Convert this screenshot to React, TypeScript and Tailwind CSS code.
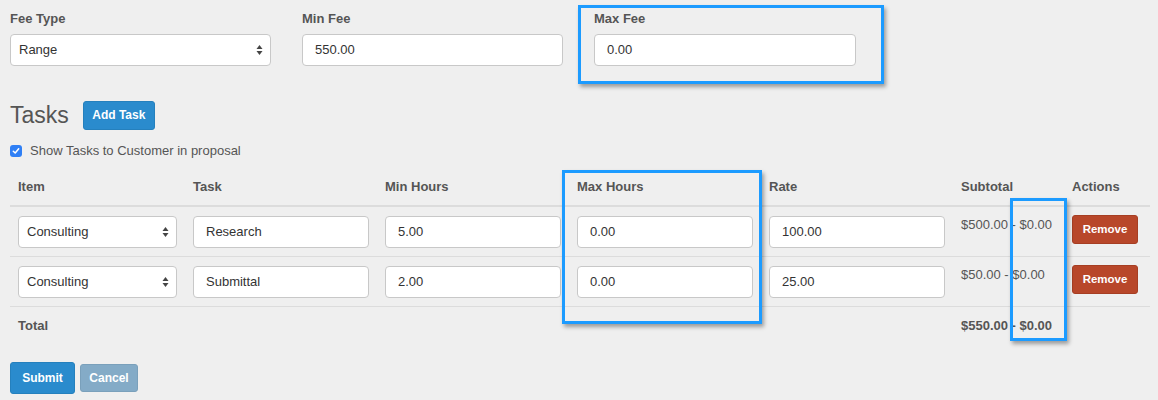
import React from 'react';

const font = { fontFamily: '"Liberation Sans", Arial, sans-serif' };

const Arrows: React.FC = () => (
  <svg className="absolute right-[7px] top-1/2 -translate-y-1/2" width="7" height="11" viewBox="0 0 7 11">
    <path d="M3.5 0.5 L6.5 4.5 L0.5 4.5 Z" fill="#444" />
    <path d="M3.5 10.5 L6.5 6.5 L0.5 6.5 Z" fill="#444" />
  </svg>
);

const Select: React.FC<{ value: string; className?: string }> = ({ value, className }) => (
  <div className={`relative h-[32px] rounded-[4px] border border-[#c8c8c8] bg-white pl-[8px] flex items-center text-[13px] text-[#333] ${className ?? ''}`}>
    {value}
    <Arrows />
  </div>
);

const Input: React.FC<{ value: string; className?: string }> = ({ value, className }) => (
  <div className={`h-[32px] rounded-[4px] border border-[#c8c8c8] bg-white pl-[12px] flex items-center text-[13px] text-[#333] ${className ?? ''}`}>
    {value}
  </div>
);

const Highlight: React.FC<{ className: string }> = ({ className }) => (
  <div className={`absolute border-[3px] border-[#1c9bff] shadow-[2px_3px_4px_rgba(0,0,0,0.35)] pointer-events-none ${className}`} />
);

const rows = [
  { item: 'Consulting', task: 'Research', min: '5.00', max: '0.00', rate: '100.00', sub: '$500.00 - $0.00' },
  { item: 'Consulting', task: 'Submittal', min: '2.00', max: '0.00', rate: '25.00', sub: '$50.00 - $0.00' },
];

const App: React.FC = () => {
  const th = 'text-left align-bottom px-[8px] pt-[8px] pb-[8px] text-[13px] font-bold text-[#555] border-b-2 border-[#dcdcdc]';
  const td = 'align-top px-[8px] pt-[9px] pb-[8px] border-b border-[#dcdcdc]';

  return (
    <div style={font} className="relative w-[1158px] h-[400px] overflow-hidden bg-[#efefef] text-[#555]">
      <div className="flex gap-[31px] pl-[10px] pt-[10px]">
        <div className="w-[261px]">
          <div className="text-[13px] font-bold leading-[18px] mb-[6px]">Fee Type</div>
          <Select value="Range" />
        </div>
        <div className="w-[261px]">
          <div className="text-[13px] font-bold leading-[18px] mb-[6px]">Min Fee</div>
          <Input value="550.00" />
        </div>
        <div className="w-[262px]">
          <div className="text-[13px] font-bold leading-[18px] mb-[6px]">Max Fee</div>
          <Input value="0.00" />
        </div>
      </div>

      <div className="flex items-center gap-[14px] pl-[10px] mt-[34px] h-[30px]">
        <h2 className="text-[23px] leading-[30px] text-[#555]">Tasks</h2>
        <button className="h-[29px] w-[72px] rounded-[3px] bg-[#2a8bcd] border border-[#2580bd] text-white text-[12px] font-bold">
          Add Task
        </button>
      </div>

      <label className="flex items-center gap-[8px] pl-[10px] mt-[12px] h-[18px] text-[13px] text-[#555]">
        <span className="w-[12px] h-[12px] rounded-[3px] bg-[#2f7ff5] flex items-center justify-center">
          <svg width="8" height="8" viewBox="0 0 8 8">
            <path d="M1.3 4.2 L3.2 6 L6.7 1.8" fill="none" stroke="white" strokeWidth="1.5" strokeLinecap="round" strokeLinejoin="round" />
          </svg>
        </span>
        Show Tasks to Customer in proposal
      </label>

      <table className="ml-[10px] mt-[9px] w-[1140px] table-fixed border-collapse">
        <colgroup>
          <col className="w-[175px]" />
          <col className="w-[192px]" />
          <col className="w-[192px]" />
          <col className="w-[192px]" />
          <col className="w-[192px]" />
          <col className="w-[111px]" />
          <col className="w-[86px]" />
        </colgroup>
        <thead>
          <tr>
            <th className={th}>Item</th>
            <th className={th}>Task</th>
            <th className={th}>Min Hours</th>
            <th className={th}>Max Hours</th>
            <th className={th}>Rate</th>
            <th className={th}>Subtotal</th>
            <th className={th}>Actions</th>
          </tr>
        </thead>
        <tbody>
          {rows.map((r, i) => (
            <tr key={i}>
              <td className={td}><Select value={r.item} /></td>
              <td className={td}><Input value={r.task} /></td>
              <td className={td}><Input value={r.min} /></td>
              <td className={td}><Input value={r.max} /></td>
              <td className={td}><Input value={r.rate} /></td>
              <td className={`${td} text-[13px] leading-[18px] text-[#555] whitespace-nowrap`}>{r.sub}</td>
              <td className={td}>
                <button className="h-[29px] w-[66px] -mt-[1px] rounded-[3px] bg-[#b8472a] border border-[#a63e23] text-white text-[11.5px] font-bold">
                  Remove
                </button>
              </td>
            </tr>
          ))}
          <tr>
            <td className="px-[8px] pt-[10px] pb-[8px] text-[13px] leading-[18px] font-bold">Total</td>
            <td className="p-[8px]" />
            <td className="p-[8px]" />
            <td className="p-[8px]" />
            <td className="p-[8px]" />
            <td className="px-[8px] pt-[10px] pb-[8px] text-[13px] leading-[18px] font-bold whitespace-nowrap">$550.00 - $0.00</td>
            <td className="p-[8px]" />
          </tr>
        </tbody>
      </table>

      <div className="flex items-center gap-[5px] pl-[10px] mt-[19px]">
        <button className="h-[32px] w-[65px] rounded-[3px] bg-[#2a8bcd] border border-[#2580bd] text-white text-[12px] font-bold">
          Submit
        </button>
        <button className="h-[28px] w-[58px] rounded-[3px] bg-[#84abc7] border border-[#7aa0bb] text-white text-[12px] font-bold">
          Cancel
        </button>
      </div>

      <Highlight className="left-[578px] top-[5px] w-[306px] h-[79px]" />
      <Highlight className="left-[562px] top-[170px] w-[200px] h-[154px]" />
      <Highlight className="left-[1010px] top-[198px] w-[57px] h-[143px]" />
    </div>
  );
};

export default App;
